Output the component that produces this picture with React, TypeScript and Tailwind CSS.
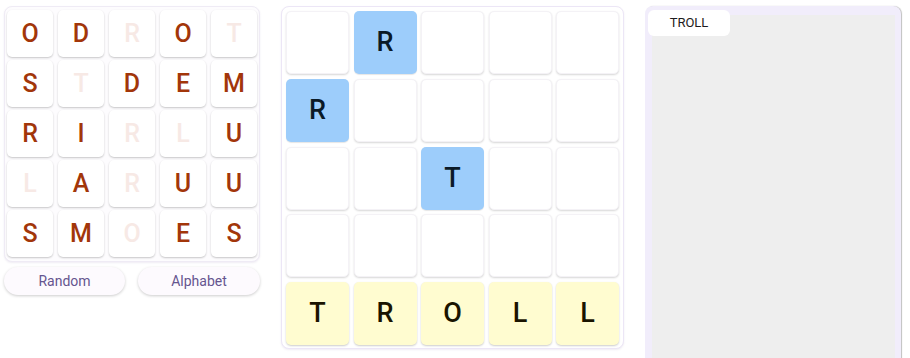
import React from "react";

const leftGrid: [string, boolean][][] = [
  [["O", true], ["D", true], ["R", false], ["O", true], ["T", false]],
  [["S", true], ["T", false], ["D", true], ["E", true], ["M", true]],
  [["R", true], ["I", true], ["R", false], ["L", false], ["U", true]],
  [["L", false], ["A", true], ["R", false], ["U", true], ["U", true]],
  [["S", true], ["M", true], ["O", false], ["E", true], ["S", true]],
];

type Cell = { l: string; t: "empty" | "blue" | "yellow" };
const E: Cell = { l: "", t: "empty" };
const midGrid: Cell[][] = [
  [E, { l: "R", t: "blue" }, E, E, E],
  [{ l: "R", t: "blue" }, E, E, E, E],
  [E, E, { l: "T", t: "blue" }, E, E],
  [E, E, E, E, E],
  [
    { l: "T", t: "yellow" },
    { l: "R", t: "yellow" },
    { l: "O", t: "yellow" },
    { l: "L", t: "yellow" },
    { l: "L", t: "yellow" },
  ],
];

export default function App() {
  return (
    <div
      className="flex h-[358px] w-[910px] items-start overflow-hidden bg-white pl-[4px] pt-[6px]"
      style={{ fontFamily: "Roboto, 'Noto Sans', sans-serif" }}
    >
      {/* Left column */}
      <div className="flex w-[256px] flex-col">
        <div className="rounded-[8px] border border-[#efebf5] bg-[#fdfcfe] px-[2px] pb-[4px] pt-[3px] shadow-[0_1px_2px_rgba(120,100,160,0.12)]">
          <div className="grid grid-cols-5 gap-x-[5px] gap-y-[3px]">
            {leftGrid.flat().map(([l, on], i) => (
              <div
                key={i}
                className="flex h-[47px] w-[46px] items-center justify-center rounded-[5px] bg-white text-[25px] font-medium shadow-[0_1px_2px_rgba(0,0,0,0.22)]"
                style={{ color: on ? "#a2360a" : "#f7e9e5" }}
              >
                {l}
              </div>
            ))}
          </div>
        </div>
        <div className="mt-[5px] flex justify-between">
          <button className="h-[28px] w-[121px] rounded-full bg-[#fdfafe] text-[14px] text-[#65558f] shadow-[0_1px_3px_rgba(0,0,0,0.2)]">
            Random
          </button>
          <button className="h-[28px] w-[122px] rounded-full bg-[#fdfafe] text-[14px] text-[#65558f] shadow-[0_1px_3px_rgba(0,0,0,0.2)]">
            Alphabet
          </button>
        </div>
      </div>

      {/* Middle board */}
      <div className="ml-[21px] h-[343px] w-[343px] rounded-[8px] border border-[#ece6f6] bg-white px-[4px] pt-[4px] shadow-[0_1px_2px_rgba(120,100,160,0.12)]">
        <div className="grid grid-cols-5 gap-x-[4.5px] gap-y-[4.75px]">
          {midGrid.flat().map((c, i) => {
            const cls =
              c.t === "blue"
                ? "bg-[#9dcdfb] text-[#0b1a27] shadow-[0_1px_1px_rgba(0,0,0,0.1)]"
                : c.t === "yellow"
                ? "bg-[#fffcd0] text-[#1a1400] shadow-[0_1px_2px_rgba(0,0,0,0.2)]"
                : "bg-white border border-[#f4f2f6] shadow-[0_1px_2px_rgba(0,0,0,0.16)]";
            return (
              <div
                key={i}
                className={`flex h-[63px] w-[63px] items-center justify-center rounded-[5px] text-[27px] font-medium ${cls}`}
              >
                {c.l}
              </div>
            );
          })}
        </div>
      </div>

      {/* Right panel */}
      <div className="relative ml-[21px] h-[360px] w-[256px] rounded-t-[8px] bg-[#f1edfb] pl-[7px] pr-[6px] pt-[9px] shadow-[1px_0_1px_rgba(0,0,0,0.25)]">
        <div className="h-full w-full bg-[#eeeeee]" />
        <div className="absolute left-[3px] top-[4px] flex h-[26px] w-[82px] items-center justify-center rounded-[6px] bg-white text-[13px] text-[#1d1b20]">
          TROLL
        </div>
      </div>
    </div>
  );
}
